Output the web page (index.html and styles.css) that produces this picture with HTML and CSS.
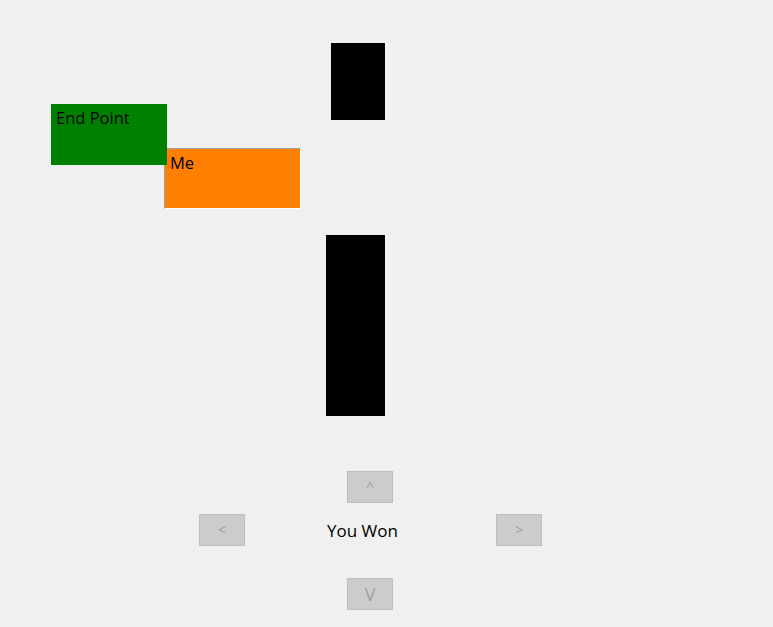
FILE: index.html
```html
<!DOCTYPE html>
<html>
<head>
<meta charset="utf-8">
<link rel="stylesheet" href="styles.css">
</head>
<body>
<main class="board">
  <div class="wall wall-top"></div>
  <div class="wall wall-bottom"></div>
  <div class="player">Me</div>
  <div class="goal">End Point</div>
  <button class="btn btn-up">^</button>
  <button class="btn btn-left">&lt;</button>
  <span class="status">You Won</span>
  <button class="btn btn-right">&gt;</button>
  <button class="btn btn-down">V</button>
</main>
</body>
</html>
```
FILE: styles.css
```css
html, body {
  margin: 0;
  padding: 0;
  background: #f0f0f0;
}
.board {
  position: relative;
  width: 773px;
  height: 627px;
  overflow: hidden;
  font-family: "Open Sans", "Noto Sans", sans-serif;
  font-size: 16.5px;
  color: #000;
}
.wall {
  position: absolute;
  background: #000;
}
.wall-top { left: 331px; top: 43px; width: 54px; height: 77px; }
.wall-bottom { left: 326px; top: 235px; width: 59px; height: 181px; }
.goal {
  position: absolute;
  left: 51px; top: 104px;
  width: 116px; height: 61px;
  box-sizing: border-box;
  background: #008000;
  padding: 3px 0 0 5px;
  line-height: 22px;
}
.player {
  position: absolute;
  left: 164px; top: 148px;
  width: 137px; height: 61px;
  box-sizing: border-box;
  background: #ff8000;
  border-left: 1px solid #a0a0a0;
  border-top: 1px solid #a0a0a0;
  border-right: 1px solid #ffffff;
  border-bottom: 1px solid #ffffff;
  padding: 3px 0 0 5px;
  line-height: 22px;
}
.btn {
  position: absolute;
  width: 46px; height: 32px;
  box-sizing: border-box;
  background: #cccccc;
  border: 1px solid #bfbfbf;
  color: #a0a0a0;
  font-family: "Open Sans", "Noto Sans", sans-serif;
  font-size: 14px;
  padding: 0;
  margin: 0;
  line-height: 30px;
}
.btn-up { left: 347px; top: 471px; }
.btn-left { left: 199px; top: 514px; }
.btn-right { left: 496px; top: 514px; }
.btn-down { left: 347px; top: 578px; font-size: 18px; }
.status {
  position: absolute;
  left: 327px; top: 519px;
  font-size: 17px;
  line-height: 23px;
  white-space: nowrap;
}
```
